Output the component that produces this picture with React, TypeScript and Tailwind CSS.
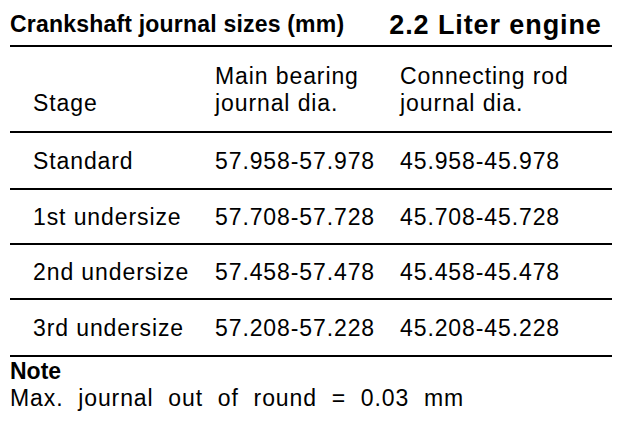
const rows = [
  { stage: "Standard", main: "57.958-57.978", rod: "45.958-45.978", h: "h-[54px]" },
  { stage: "1st undersize", main: "57.708-57.728", rod: "45.708-45.728", h: "h-[52px]" },
  { stage: "2nd undersize", main: "57.458-57.478", rod: "45.458-45.478", h: "h-[52px]" },
  { stage: "3rd undersize", main: "57.208-57.228", rod: "45.208-45.228", h: "h-[54px]" },
];

export default function App() {
  return (
    <div
      className="h-[422px] w-[624px] bg-white px-[10px] text-black"
      style={{ fontFamily: '"Liberation Sans", Arial, sans-serif' }}
    >
      {/* title */}
      <div className="flex h-[47px] w-[602px] items-end whitespace-nowrap border-b-2 border-black pb-[6px]">
        <span className="mb-[3px] shrink-0 text-[23px] font-bold leading-none tracking-[0.2px]">
          Crankshaft journal sizes (mm)
        </span>
        <span className="ml-[45px] shrink-0 text-[27px] font-bold leading-none tracking-[0.9px]">
          2.2 Liter engine
        </span>
      </div>

      {/* header */}
      <div className="grid h-[86px] w-[602px] grid-cols-[205px_185px_1fr] items-end border-b-2 border-black pb-[14px] text-[23px] leading-[27px] tracking-[0.9px]">
        <div className="pl-[23px]">Stage</div>
        <div>
          Main bearing
          <br />
          journal dia.
        </div>
        <div>
          Connecting rod
          <br />
          journal dia.
        </div>
      </div>

      {rows.map((r) => (
        <div
          key={r.stage}
          className={`grid ${r.h} box-content w-[602px] grid-cols-[205px_185px_1fr] items-center border-b-2 border-black pt-[1px] text-[23px] leading-none tracking-[0.9px]`}
        >
          <div className="pl-[23px]">{r.stage}</div>
          <div>{r.main}</div>
          <div>{r.rod}</div>
        </div>
      ))}

      {/* note */}
      <div className="text-[23px]">
        <div className="mt-[3px] font-bold leading-[22px]">Note</div>
        <div className="mt-[2px] leading-[28px] tracking-[0.9px] [word-spacing:7.5px]">
          Max. journal out of round = 0.03 mm
        </div>
      </div>
    </div>
  );
}
